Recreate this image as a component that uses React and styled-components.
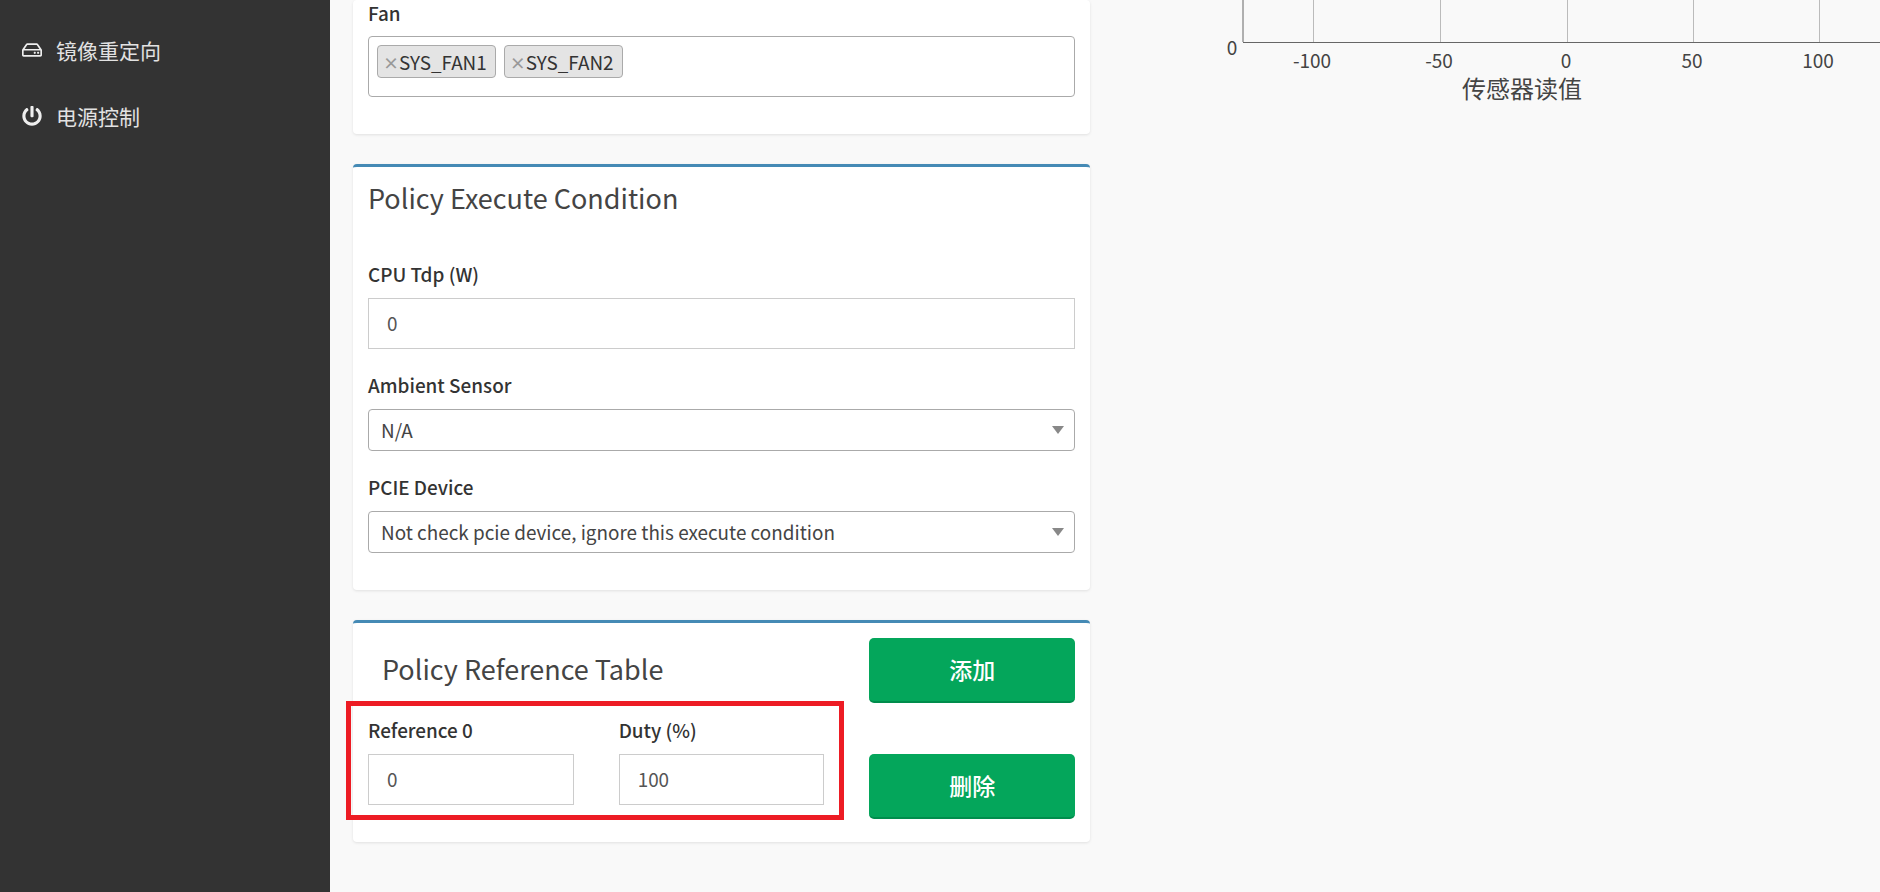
import React from "react";
import styled, { createGlobalStyle } from "styled-components";
import { FaPowerOff, FaRegHdd } from "react-icons/fa";

const FONT = `"Noto Sans CJK SC", "Noto Sans", sans-serif`;

const Global = createGlobalStyle`
  html, body { margin: 0; padding: 0; height: 892px; overflow: hidden; background: #f9f9f9; }
  body { font-family: ${FONT}; color: #333; }
  * { box-sizing: border-box; }
`;

const Page = styled.div`
  display: flex;
  height: 892px;
  overflow: hidden;
`;

const Sidebar = styled.nav`
  flex: 0 0 330px;
  background: #333;
  padding-top: 17px;
  display: flex;
  flex-direction: column;
`;

const NavItem = styled.a`
  display: flex;
  align-items: center;
  height: 66px;
  padding-left: 22px;
  color: #e2e2e2;
  font-size: 21px;
  line-height: 1;
`;

const NavIcon = styled.span`
  display: flex;
  width: 34px;
  font-size: 20px;
  color: #eee;
`;

const Main = styled.main`
  flex: 0 0 760px;
  padding-left: 23px;
  display: flex;
  flex-direction: column;
  gap: 30px;
`;

const Card = styled.section`
  background: #fff;
  border-radius: 4px;
  border-top: ${(p) => (p.$accent ? "3px solid #458ab5" : "none")};
  box-shadow: 0 1px 3px rgba(0, 0, 0, 0.1);
  padding: ${(p) => p.$pad || "0 15px"};
`;

const Label = styled.label`
  display: block;
  font-size: 18.9px;
  font-weight: 500;
  line-height: 20px;
  color: #333;
  margin-bottom: ${(p) => p.$gap || 14}px;
`;

const Field = styled.div`
  margin-top: ${(p) => p.$top || 0}px;
`;

const Title = styled.h3`
  margin: 0;
  font-size: 27px;
  font-weight: 400;
  line-height: 34px;
  color: #444;
`;

const TextInput = styled.input`
  display: block;
  width: 100%;
  height: 51px;
  border: 1px solid #ccc;
  background: #fff;
  padding: 0 0 2px 18px;
  font-family: ${FONT};
  font-size: 18.9px;
  color: #555;
  outline: none;
`;

const SelectBox = styled.div`
  display: flex;
  align-items: center;
  justify-content: space-between;
  height: 42px;
  border: 1px solid #aaa;
  border-radius: 4px;
  padding: 0 10px 1px 12px;
  font-size: 18.9px;
  color: #444;
`;

const Caret = styled.span`
  width: 0;
  height: 0;
  border-left: 6px solid transparent;
  border-right: 6px solid transparent;
  border-top: 8px solid #888;
`;

const MultiBox = styled.div`
  display: flex;
  align-items: flex-start;
  gap: 8px;
  height: 61px;
  border: 1px solid #aaa;
  border-radius: 4px;
  padding: 8px 8px;
`;

const Tag = styled.span`
  display: inline-flex;
  align-items: center;
  height: 33px;
  padding: 0 8px 0 5px;
  background: #e4e4e4;
  border: 1px solid #aaa;
  border-radius: 4px;
  font-size: 18.9px;
  color: #333;
`;

const TagClose = styled.span`
  color: #999;
  font-size: 16px;
  font-weight: 700;
`;

const RefGrid = styled.div`
  display: grid;
  grid-template-columns: repeat(3, 1fr);
  column-gap: 45px;
  row-gap: 17px;
`;

const RefTitle = styled(Title)`
  grid-column: span 2;
  align-self: center;
  padding-left: 14px;
  margin-bottom: 4px;
`;

const GreenButton = styled.button`
  height: 65px;
  border: none;
  border-bottom: 2px solid #008d4c;
  border-radius: 5px;
  background: #04a65b;
  color: #fff;
  font-family: ${FONT};
  font-size: 23px;
  font-weight: 500;
  padding: 0 0 2px;
  align-self: end;
  width: 100%;
`;

const RefPair = styled.div`
  grid-column: span 2;
  position: relative;
  display: grid;
  grid-template-columns: 1fr 1fr;
  column-gap: 45px;
  margin-bottom: 14px;
`;

const Highlight = styled.div`
  position: absolute;
  top: -19px;
  left: -22px;
  right: -20px;
  bottom: -15px;
  border: 5px solid #ed1c24;
  pointer-events: none;
`;

const ChartPane = styled.aside`
  flex: 1;
  min-width: 0;
  padding-left: 130px;
`;

const AxisText = styled.text`
  font-family: ${FONT};
  font-size: ${(p) => p.$size || 19}px;
  fill: #444;
`;

const ticks = [
  [-100, 1313],
  [-50, 1440],
  [0, 1567],
  [50, 1693],
  [100, 1819],
];

function Chart() {
  const ox = 1220;
  return (
    <svg width="660" height="110" viewBox="0 0 660 110">
      {ticks.map(([v, x]) => (
        <g key={v}>
          <line x1={x - ox + 0.5} x2={x - ox + 0.5} y1="0" y2="42" stroke="#bbb" strokeWidth="1" />
          <AxisText x={x - ox - 1} y="68" textAnchor="middle">{v}</AxisText>
        </g>
      ))}
      <line x1="23" x2="23" y1="0" y2="42" stroke="#666" strokeWidth="1" />
      <line x1="23" x2="660" y1="42.5" y2="42.5" stroke="#666" strokeWidth="1" />
      <AxisText x="12" y="55" textAnchor="middle">0</AxisText>
      <AxisText x="302" y="98" textAnchor="middle" $size="24">传感器读值</AxisText>
    </svg>
  );
}

export default function App() {
  return (
    <Page>
      <Global />
      <Sidebar>
        <NavItem><NavIcon><FaRegHdd /></NavIcon>镜像重定向</NavItem>
        <NavItem><NavIcon><FaPowerOff /></NavIcon>电源控制</NavItem>
      </Sidebar>
      <Main>
        <Card $pad="3px 15px 37px">
          <Label $gap={13}>Fan</Label>
          <MultiBox>
            <Tag><TagClose>×</TagClose>SYS_FAN1</Tag>
            <Tag><TagClose>×</TagClose>SYS_FAN2</Tag>
          </MultiBox>
        </Card>
        <Card $accent $pad="14px 15px 37px">
          <Title>Policy Execute Condition</Title>
          <Field $top={49}>
            <Label>CPU Tdp (W)</Label>
            <TextInput readOnly value="0" />
          </Field>
          <Field $top={26}>
            <Label>Ambient Sensor</Label>
            <SelectBox>N/A<Caret /></SelectBox>
          </Field>
          <Field $top={26}>
            <Label>PCIE Device</Label>
            <SelectBox>Not check pcie device, ignore this execute condition<Caret /></SelectBox>
          </Field>
        </Card>
        <Card $accent $pad="15px 15px 23px">
          <RefGrid>
            <RefTitle>Policy Reference Table</RefTitle>
            <GreenButton>添加</GreenButton>
            <RefPair>
              <Field>
                <Label>Reference 0</Label>
                <TextInput readOnly value="0" />
              </Field>
              <Field>
                <Label>Duty (%)</Label>
                <TextInput readOnly value="100" />
              </Field>
              <Highlight />
            </RefPair>
            <GreenButton>删除</GreenButton>
          </RefGrid>
        </Card>
      </Main>
      <ChartPane>
        <Chart />
      </ChartPane>
    </Page>
  );
}
